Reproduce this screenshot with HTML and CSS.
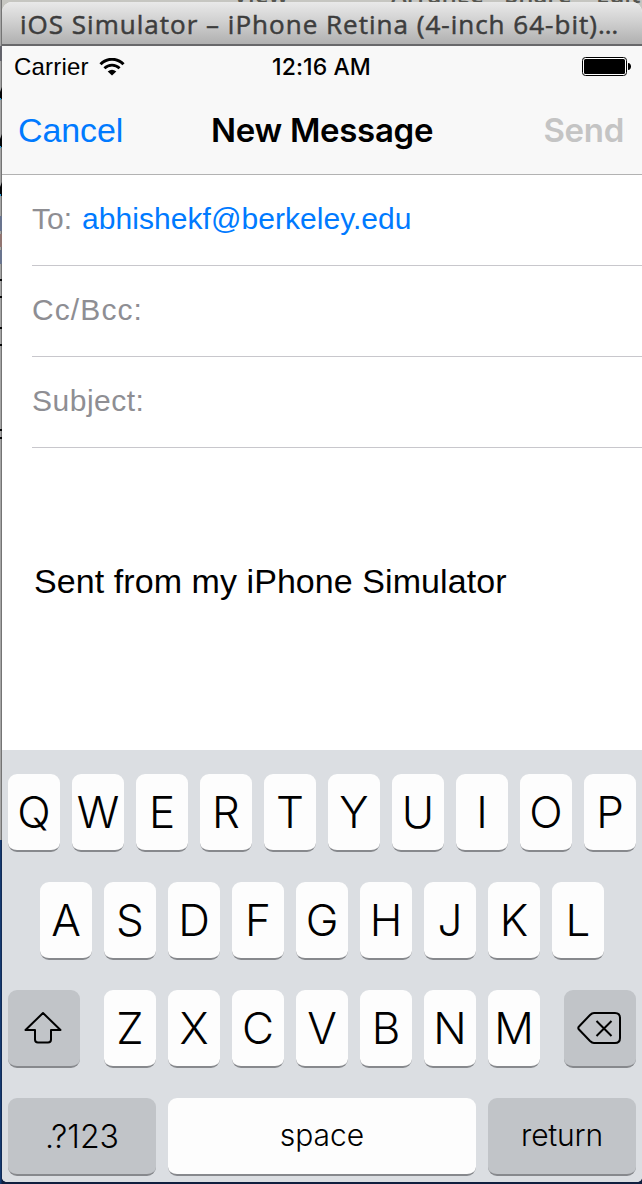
FILE: index.html
```html
<!DOCTYPE html>
<html lang="en">
<head>
<meta charset="utf-8">
<title>New Message</title>
<link rel="stylesheet" href="styles.css">
</head>
<body>
<div class="desktop">
  <div class="menu"><span class="m1">View</span><span class="m2">Arrange</span><span class="m3">Share</span><span class="m4">Edit</span></div>
  <svg class="edge" width="2" height="1184" viewBox="0 0 2 1184">
    <rect width="2" height="840" fill="#a5a5a5"/><rect x="1" width="1" height="840" fill="#747474"/>
    <rect y="840" width="2" height="344" fill="#153a70"/><rect x="1" y="840" width="1" height="344" fill="#112b56"/>
    <path d="M0 46h2v15H0z" fill="#62636b"/>
    <path d="M0 92l2-5v12H0zM0 139l2-5v13H0zM0 187l2-5v14H0zM0 279h2v2H0zM0 296h2v2H0zM0 327h2v2H0zM0 344h2v2H0zM0 429h2v2H0zM0 437h2v2H0z" fill="#050608"/>
    <path d="M0 98h1v2H0zM0 146h1v2H0zM0 194h1v2H0z" fill="#2ba1dd"/>
    <path d="M0 216h2v15H0zM0 250h2v14H0z" fill="#69748e"/>
    <path d="M0 234h2v13H0z" fill="#917571"/>
  </svg>
  <div class="window">
    <div class="titlebar"><span>iOS Simulator – iPhone Retina (4-inch 64-bit)…</span></div>
    <header class="top">
      <div class="status">
        <div class="carrier"><span>Carrier</span>
          <svg width="26" height="18" viewBox="0 0 26 18"><path d="M1.500 6.300C8-.4 18-.4 24.500 6.300" fill="none" stroke="#000" stroke-width="3"/><path d="M5.400 10.200c4.400-4.200 10.800-4.200 15.200 0" fill="none" stroke="#000" stroke-width="2.800"/><path d="M8.700 13.500q4.300-3.600 8.600 0L13 17.600z"/></svg>
        </div>
        <div class="time">12:16 AM</div>
        <svg class="battery" width="50" height="20" viewBox="0 0 50 20"><rect x=".5" y="1.500" width="44" height="18" rx="3" fill="#fff" stroke="#000"/><rect x="2" y="3" width="41" height="15" rx="1.500"/><path d="M46 7c4 0 4 7 0 7z"/></svg>
      </div>
      <div class="nav"><span class="cancel">Cancel</span><span class="heading">New Message</span><span class="send">Send</span></div>
    </header>
    <main class="mail">
      <div class="field"><span class="to">To:</span><span class="address">abhishekf@berkeley.edu</span></div>
      <div class="field"><span class="cc">Cc/Bcc:</span></div>
      <div class="field"><span class="subject">Subject:</span></div>
      <p class="body"><span>Sent from my iPhone Simulator</span></p>
    </main>
    <div class="keyboard">
      <div class="row"><b>Q</b><b>W</b><b>E</b><b>R</b><b>T</b><b>Y</b><b>U</b><b>I</b><b>O</b><b>P</b></div>
      <div class="row"><b>A</b><b>S</b><b>D</b><b>F</b><b>G</b><b>H</b><b>J</b><b>K</b><b>L</b></div>
      <div class="row"><b class="dark side shift"><svg width="40" height="34" viewBox="0 0 40 34"><path d="M19 2L1.500 19H11v9.500Q11 31.500 14 31.500h10q3 0 3-3V19h9.500z" fill="none" stroke="#000" stroke-width="2" stroke-linejoin="round"/></svg></b><b>Z</b><b>X</b><b>C</b><b>V</b><b>B</b><b>N</b><b>M</b><b class="dark side delete"><svg width="46" height="34" viewBox="0 0 46 34"><path d="M17 2h21q5 0 5 5v20q0 5-5 5H17q-2 0-4-2L2 18.500Q.5 17 2 15.500L13 4q2-2 4-2zM19.500 10l15 15M34.500 10l-15 15" fill="none" stroke="#000" stroke-width="2"/></svg></b></div>
      <div class="row"><b class="dark wide numbers"><span>.?123</span></b><b class="space"><span>space</span></b><b class="dark wide return"><span>return</span></b></div>
    </div>
  </div>
</div>
</body>
</html>
```
FILE: styles.css
```css
* { box-sizing: border-box; }
body { margin: 0; font-family: "Liberation Sans", sans-serif; }
.desktop { position: relative; width: 642px; height: 1184px; overflow: hidden; background: #101f3f; padding: 2px 0 2px 2px; }
.menu { position: absolute; left: 0; top: 0; width: 642px; height: 12px; overflow: hidden; background: #c6c6c1; color: #55554f; font: 600 24px/24px "Open Sans", sans-serif; }
.menu span { position: absolute; top: -18px; }
.m1 { left: 233px; }
.m2 { left: 391px; }
.m3 { left: 505px; }
.m4 { left: 596px; }
.edge { position: absolute; left: 0; top: 0; }
.window { position: relative; width: 640px; height: 1180px; border-radius: 10px 10px 5px 5px; overflow: hidden; display: flex; flex-direction: column; background: #fff; }
.titlebar { height: 44px; flex: none; background: linear-gradient(#e9e9e9, #cecece 50%, #b0b0b0); border-bottom: 2px solid #68686a; padding-left: 18px; font: 26px/45px "Open Sans", sans-serif; letter-spacing: 1.01px; color: #3d3d3d; -webkit-text-stroke: 0.5px #3d3d3d; white-space: nowrap; }
.top { height: 129px; flex: none; background: #f8f8f8; border-bottom: 1px solid #b2b2b2; }
.status { height: 42px; display: grid; grid-template-columns: 270px 1fr 60px; font-size: 24px; line-height: 42px; }
.carrier { display: flex; align-items: center; gap: 10px; padding-left: 12px; letter-spacing: 0.2px; }
.time { font: 500 23px/42px Inter, sans-serif; letter-spacing: 0.1px; white-space: nowrap; }
.battery { margin-top: 10px; }
.nav { height: 86px; padding: 0 18px 0 16px; display: grid; grid-template-columns: 193px 1fr auto; font-size: 34px; line-height: 84px; white-space: nowrap; }
.cancel { color: #007aff; letter-spacing: -0.1px; }
.heading, .send { font-family: Inter, sans-serif; font-weight: 600; font-size: 33px; letter-spacing: -0.3px; }
.send { color: #c4c4c4; }
.mail { height: 575px; flex: none; }
.field { height: 91px; margin-left: 30px; border-bottom: 1px solid #c8c7cc; color: #8e8e93; font-size: 30px; line-height: 87px; display: flex; gap: 10px; }
.address { color: #007aff; letter-spacing: 0.05px; }
.cc { letter-spacing: 1.1px; }
.subject { letter-spacing: 0.5px; }
.body { margin: 112px 0 0 32px; font-size: 34px; line-height: 42px; letter-spacing: 0.07px; white-space: nowrap; }
.keyboard { flex: 1; background: #dbdee2; padding: 24px 6px 0; display: flex; flex-direction: column; gap: 30px; }
.row { display: flex; justify-content: center; gap: 12px; width: 628px; }
.row b { width: 52px; height: 78px; border-radius: 9px; border-bottom: 2px solid #87898d; background: #fdfdfd; font: 300 44px/76px Inter, sans-serif; display: flex; justify-content: center; align-items: center; color: #000; }
.row .dark { background: #c1c4c8; }
.row .side { width: 72px; }
.shift { margin-right: 12px; }
.delete { margin-left: 12px; }
.row .wide { width: 148px; }
.row .numbers { font-size: 32px; padding-top: 2px; }
.row .space { width: 308px; font-size: 30px; padding-bottom: 3px; }
.row .return { font-size: 30px; letter-spacing: -0.2px; padding-bottom: 3px; }
```
